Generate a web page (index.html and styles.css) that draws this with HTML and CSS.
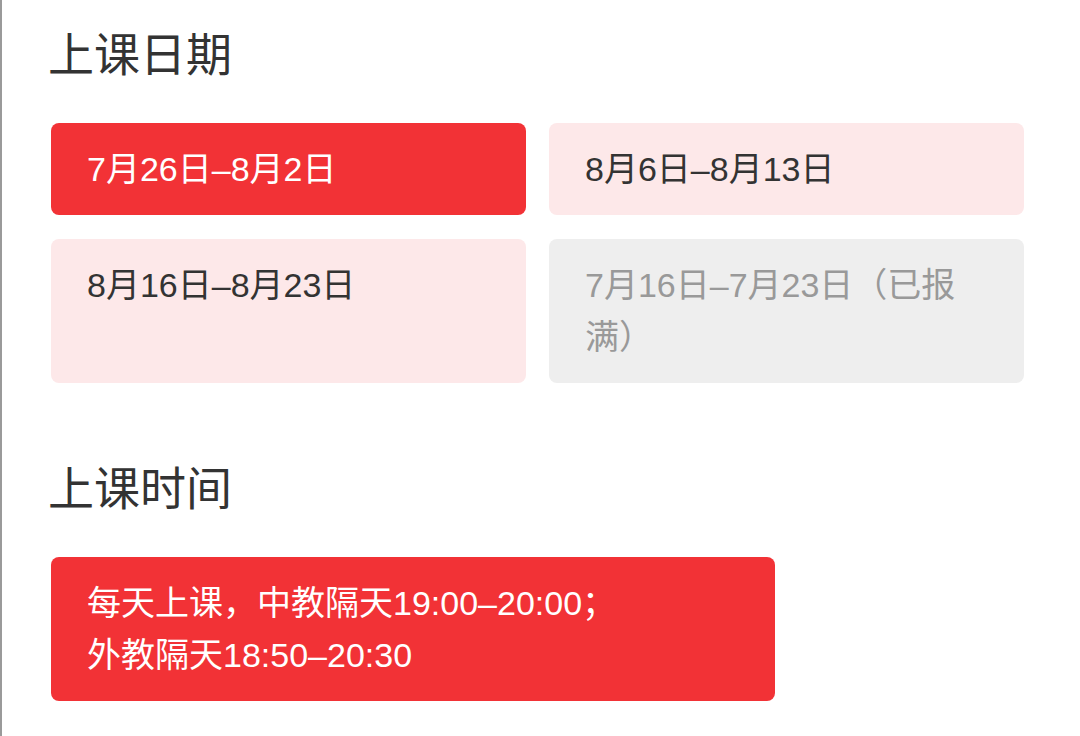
FILE: index.html
```html
<!DOCTYPE html>
<html lang="zh-CN">
<head>
<meta charset="utf-8">
<title>上课日期</title>
<link rel="stylesheet" href="styles.css">
</head>
<body>
<main class="page">
  <section class="block">
    <h2 class="title">上课日期</h2>
    <div class="grid">
      <div class="opt opt-active">7月26日–8月2日</div>
      <div class="opt">8月6日–8月13日</div>
      <div class="opt">8月16日–8月23日</div>
      <div class="opt opt-full">7月16日–7月23日（已报满）</div>
    </div>
  </section>
  <section class="block">
    <h2 class="title">上课时间</h2>
    <div class="time opt-active">每天上课，中教隔天19:00–20:00；<br>外教隔天18:50–20:30</div>
  </section>
</main>
</body>
</html>
```

FILE: styles.css
```css
html, body {
  margin: 0;
  padding: 0;
  background: #ffffff;
}
body {
  font-family: "Liberation Sans", "Noto Sans CJK SC", sans-serif;
  color: #333333;
  border-left: 2px solid #9a9a9a;
  min-height: 736px;
  box-sizing: border-box;
}
.page {
  padding: 21px 56px 0 49px;
}
.block + .block {
  margin-top: 72px;
}
.title {
  margin: 0 0 42px -3px;
  font-family: "Noto Sans CJK SC", sans-serif;
  font-size: 46px;
  line-height: 60px;
  font-weight: 400;
  color: #333333;
}
.grid {
  display: grid;
  grid-template-columns: 475px 475px;
  column-gap: 23px;
  row-gap: 24px;
}
.opt {
  background: #fde8e9;
  border-radius: 8px;
  padding: 20px 36px;
  font-size: 34px;
  line-height: 52px;
  color: #333333;
}
.opt-active {
  background: #f23236;
  color: #ffffff;
}
.opt-full {
  background: #eeeeee;
  color: #999999;
}
.time {
  width: 724px;
  box-sizing: border-box;
  border-radius: 8px;
  padding: 20px 36px;
  font-size: 34px;
  line-height: 52px;
}
```
